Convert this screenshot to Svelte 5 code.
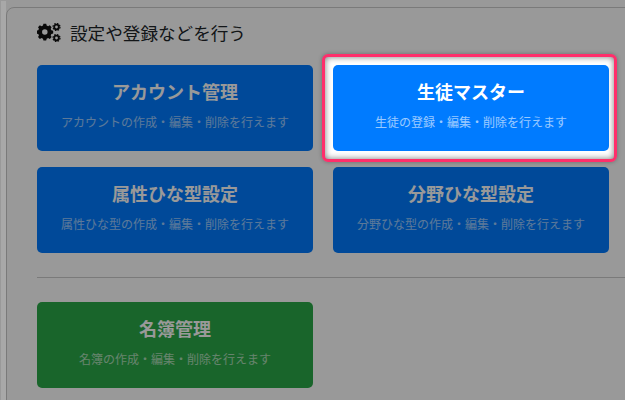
<script>
  const rows = [
    [
      { title: 'アカウント管理', desc: 'アカウントの作成・編集・削除を行えます' },
      { title: '生徒マスター', desc: '生徒の登録・編集・削除を行えます', active: true },
    ],
    [
      { title: '属性ひな型設定', desc: '属性ひな型の作成・編集・削除を行えます' },
      { title: '分野ひな型設定', desc: '分野ひな型の作成・編集・削除を行えます' },
    ],
  ];
</script>

<div class="page">
  <section class="panel">
    <h2>
      <svg class="cogs" viewBox="0 0 24 20" width="24" height="20" aria-hidden="true">
        <path fill="#111" fill-rule="evenodd" d="M7 3h3l.5 2 1.600.7 1.800-1 2 2-1 1.800.7 1.600 2 .5v3l-2 .5-.7 1.600 1 1.800-2 2-1.800-1-1.600.7-.5 2H7l-.5-2-1.600-.7-1.800 1-2-2 1-1.800-.7-1.600-2-.5v-3l2-.5.7-1.600-1-1.800 2-2 1.800 1L6.500 5zM8.500 9a3 3 0 1 0 0 6 3 3 0 0 0 0-6z" transform="translate(0 -2) scale(.92)"/>
        {#each [4, 15] as cy}
          <circle cx="19.500" {cy} r="2.300" fill="none" stroke="#111" stroke-width="1.800"/>
          <circle cx="19.500" {cy} r="3.500" fill="none" stroke="#111" stroke-width="1.200" stroke-dasharray="1.500 1.250"/>
        {/each}
      </svg>
      設定や登録などを行う
    </h2>

    {#each rows as row}
      <div class="row">
        {#each row as item}
          <div class="tile" class:active={item.active}>
            <strong>{item.title}</strong>
            <span>{item.desc}</span>
          </div>
        {/each}
      </div>
    {/each}

    <hr />

    <div class="row">
      <div class="tile green">
        <strong>名簿管理</strong>
        <span>名簿の作成・編集・削除を行えます</span>
      </div>
    </div>
  </section>
  <div class="overlay"></div>
  <div class="edge"></div>
</div>

<style>
  :global(body) {
    margin: 0;
    background: #fff;
    font-family: "Liberation Serif", "Noto Sans CJK JP", serif;
  }

  .page {
    position: relative;
    width: 625px;
    height: 400px;
    overflow: hidden;
    padding: 7px 0 0 6px;
    box-sizing: border-box;
  }

  .panel {
    width: 660px;
    height: 500px;
    box-sizing: border-box;
    border: 1px solid #ccc;
    border-radius: 8px;
    padding: 0 30px;
  }

  h2 {
    display: flex;
    align-items: center;
    gap: 9px;
    margin: 0;
    height: 57px;
    padding-bottom: 8px;
    font-size: 17.6px;
    font-weight: 400;
    color: #212529;
    box-sizing: border-box;
  }

  .row {
    display: flex;
    gap: 20px;
    margin-bottom: 16px;
  }

  .tile {
    width: 276px;
    height: 86px;
    box-sizing: border-box;
    border-radius: 5px;
    background: #007bff;
    color: #fff;
    display: flex;
    flex-direction: column;
    align-items: center;
    padding-top: 16px;
  }

  .green {
    background: #2ba948;
  }

  .tile strong {
    font-size: 18px;
    line-height: 24px;
    font-weight: 700;
  }

  .tile span {
    font-size: 12px;
    line-height: 18px;
    margin-top: 9px;
    opacity: 0.6;
  }

  .active {
    position: relative;
    z-index: 2;
    box-shadow: 0 0 0 7px #fff;
  }

  .active::after {
    content: '';
    position: absolute;
    inset: -11px -8px -11px -11px;
    border: 3px solid #ff2e6b;
    border-radius: 6px;
    box-shadow:
      inset 0 0 6px rgba(0, 0, 0, 0.55),
      inset 0 0 0 5px #fff,
      0 0 4px rgba(0, 0, 0, 0.3);
  }

  hr {
    border: 0;
    border-top: 1px solid #ccc;
    margin: 24px 0;
  }

  .overlay {
    position: absolute;
    inset: 0;
    background: rgba(0, 0, 0, 0.4);
    z-index: 1;
  }

  .edge {
    position: absolute;
    top: 1px;
    bottom: 0;
    left: 1px;
    width: 5px;
    background: #a8a8a8;
    z-index: 1;
  }
</style>
